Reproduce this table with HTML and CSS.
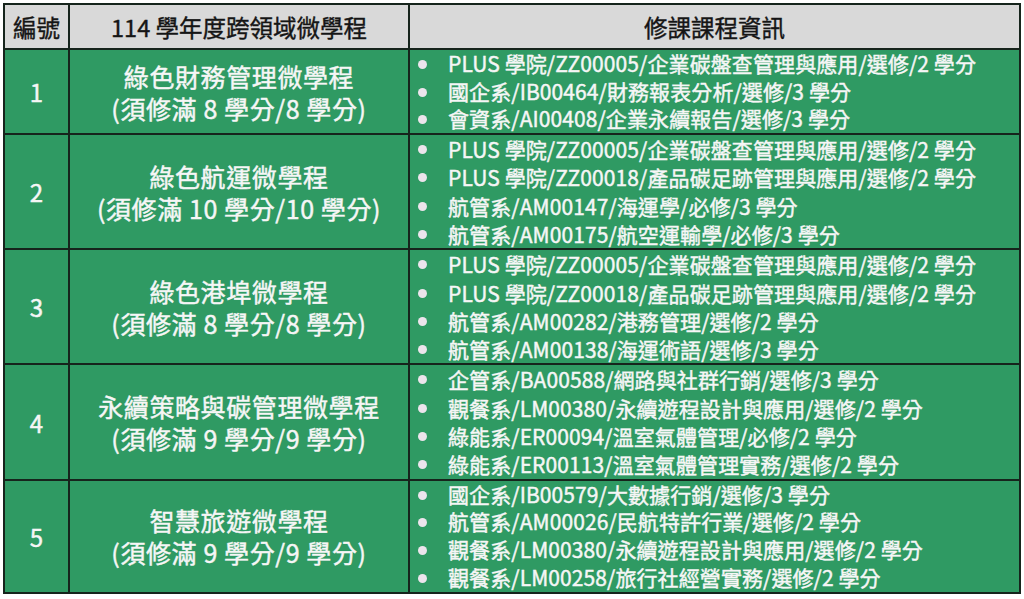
FILE: index.html
```html
<!DOCTYPE html>
<html lang="zh-Hant">
<head>
<meta charset="utf-8">
<title>114 學年度跨領域微學程</title>
<link rel="stylesheet" href="styles.css">
</head>
<body>
<table class="programs">
  <colgroup>
    <col class="c-no">
    <col class="c-name">
    <col class="c-info">
  </colgroup>
  <thead>
    <tr class="head">
      <th>編號</th>
      <th>114 學年度跨領域微學程</th>
      <th>修課課程資訊</th>
    </tr>
  </thead>
  <tbody>
    <tr class="r3">
      <td class="no">1</td>
      <td class="name">綠色財務管理微學程<br>(須修滿 8 學分/8 學分)</td>
      <td class="info"><ul>
        <li>PLUS 學院/ZZ00005/企業碳盤查管理與應用/選修/2 學分</li>
        <li>國企系/IB00464/財務報表分析/選修/3 學分</li>
        <li>會資系/AI00408/企業永續報告/選修/3 學分</li>
      </ul></td>
    </tr>
    <tr class="r4">
      <td class="no">2</td>
      <td class="name">綠色航運微學程<br>(須修滿 10 學分/10 學分)</td>
      <td class="info"><ul>
        <li>PLUS 學院/ZZ00005/企業碳盤查管理與應用/選修/2 學分</li>
        <li>PLUS 學院/ZZ00018/產品碳足跡管理與應用/選修/2 學分</li>
        <li>航管系/AM00147/海運學/必修/3 學分</li>
        <li>航管系/AM00175/航空運輸學/必修/3 學分</li>
      </ul></td>
    </tr>
    <tr class="r4">
      <td class="no">3</td>
      <td class="name">綠色港埠微學程<br>(須修滿 8 學分/8 學分)</td>
      <td class="info"><ul>
        <li>PLUS 學院/ZZ00005/企業碳盤查管理與應用/選修/2 學分</li>
        <li>PLUS 學院/ZZ00018/產品碳足跡管理與應用/選修/2 學分</li>
        <li>航管系/AM00282/港務管理/選修/2 學分</li>
        <li>航管系/AM00138/海運術語/選修/3 學分</li>
      </ul></td>
    </tr>
    <tr class="r4">
      <td class="no">4</td>
      <td class="name">永續策略與碳管理微學程<br>(須修滿 9 學分/9 學分)</td>
      <td class="info"><ul>
        <li>企管系/BA00588/網路與社群行銷/選修/3 學分</li>
        <li>觀餐系/LM00380/永續遊程設計與應用/選修/2 學分</li>
        <li>綠能系/ER00094/溫室氣體管理/必修/2 學分</li>
        <li>綠能系/ER00113/溫室氣體管理實務/選修/2 學分</li>
      </ul></td>
    </tr>
    <tr class="r4 last">
      <td class="no">5</td>
      <td class="name">智慧旅遊微學程<br>(須修滿 9 學分/9 學分)</td>
      <td class="info"><ul>
        <li>國企系/IB00579/大數據行銷/選修/3 學分</li>
        <li>航管系/AM00026/民航特許行業/選修/2 學分</li>
        <li>觀餐系/LM00380/永續遊程設計與應用/選修/2 學分</li>
        <li>觀餐系/LM00258/旅行社經營實務/選修/2 學分</li>
      </ul></td>
    </tr>
  </tbody>
</table>
</body>
</html>
```

FILE: styles.css
```css
html, body {
  margin: 0;
  padding: 0;
  background: #ffffff;
}

body {
  padding: 3px 0 0 3px;
  font-family: "Noto Sans CJK TC", "Noto Sans", sans-serif;
}

.programs {
  border-collapse: collapse;
  width: 1016px;
  table-layout: fixed;
}

.c-no { width: 65px; }
.c-name { width: 340px; }
.c-info { width: 611px; }

.programs th,
.programs td {
  border: 2px solid #16241c;
  padding: 0;
}

.head th {
  background: #d9d9d9;
  color: #151515;
  font-weight: 400;
  -webkit-text-stroke: 0.4px #151515;
  font-size: 23.5px;
  height: 43px;
  line-height: 30px;
  text-align: center;
  vertical-align: middle;
}

.programs td {
  background: #2f9a63;
  color: #f6f6f6;
  vertical-align: middle;
  -webkit-text-stroke: 0.45px #f6f6f6;
}

.no {
  text-align: center;
  font-size: 24px;
  font-weight: 400;
}

.name {
  text-align: center;
  font-size: 25px;
  font-weight: 400;
  line-height: 32px;
  letter-spacing: 0.6px;
}

.info ul {
  list-style: none;
  margin: 0;
  padding: 0 0 0 38px;
}

.info li {
  position: relative;
  font-size: 21px;
  font-weight: 400;
  line-height: 28.3px;
  letter-spacing: 0.1px;
  white-space: nowrap;
}

.r3 .info li {
  line-height: 27.7px;
}

.last .info li {
  line-height: 27.8px;
}

.info li::before {
  content: "";
  position: absolute;
  left: -30px;
  top: 10px;
  width: 9px;
  height: 9px;
  border-radius: 50%;
  background: #ece4ec;
}
```
